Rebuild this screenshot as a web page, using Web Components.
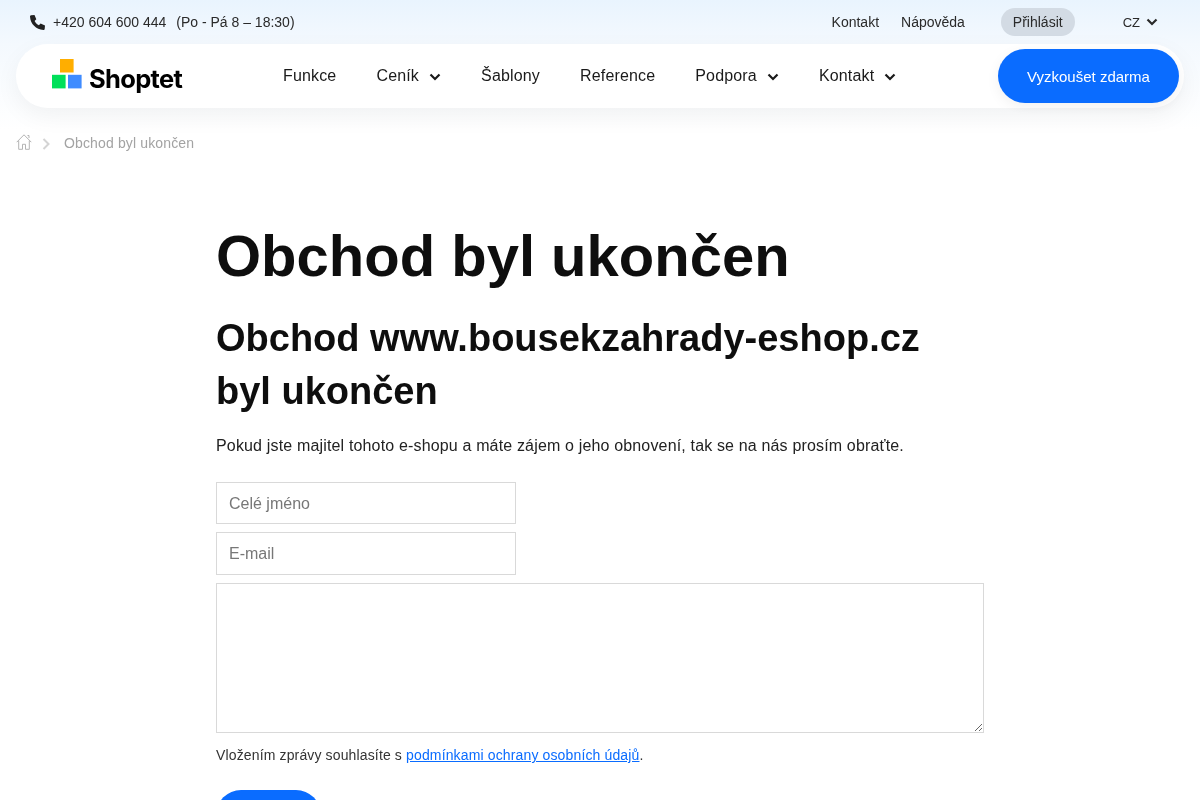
<!DOCTYPE html>
<html lang="cs">
<head>
<meta charset="utf-8">
<title>Obchod byl ukončen</title>
<style>
html, body { margin: 0; padding: 0; height: 800px; overflow: hidden; background: #fff; }
body { font-family: "Liberation Sans", Arial, sans-serif; color: #111; }
</style>
</head>
<body>
<site-header></site-header>
<bread-crumbs>Obchod byl ukončen</bread-crumbs>
<closed-shop></closed-shop>

<template id="chev"><svg width="12" height="8" viewBox="0 0 12 8" fill="none" stroke="currentColor" stroke-width="2.2"><path d="M1.5 1.500 6 6l4.500-4.500"/></svg></template>

<script>
const chevron = document.getElementById("chev").innerHTML;

const header = document.createElement("template");
header.innerHTML = `
<style>
:host { display: block; height: 130px; background: linear-gradient(180deg, #e9f4fe 0, #f4f9fe 44px, #fff 130px); }
* { box-sizing: border-box; }
.top {
  height: 44px; display: flex; align-items: center; padding: 0 42px 0 30px;
  font-size: 14px; color: #2a2a2a; will-change: transform;
}
.top svg.phone { margin-right: 8px; }
.hours { margin-left: 10px; }
.right { margin-left: auto; display: flex; align-items: center; }
.right a { color: inherit; text-decoration: none; }
.help { margin-left: 22px; }
.login { margin-left: 36px; background: #d3dbe4; border-radius: 14px; height: 28px; line-height: 28px; padding: 0 12px; }
.lang { margin-left: 48px; font-size: 13px; display: flex; align-items: center; gap: 6px; }
.lang svg { width: 12px; height: 8px; }
nav {
  margin: 0 16px; height: 64px; background: #fff; border-radius: 32px;
  box-shadow: 0 8px 24px rgba(0,0,0,.05); will-change: transform;
  display: flex; align-items: center; padding: 0 5px 0 36px; position: relative;
}
.logo { display: flex; align-items: flex-end; gap: 7px; width: 231px; height: 34px; margin-top: -9px; }
.logo svg { flex: none; }
.logo span {
  font-family: Inter, "Liberation Sans", sans-serif; font-weight: 700; font-size: 25.500px;
  letter-spacing: -.68px; color: #000; line-height: 30px; margin-bottom: -5px;
}
ul { list-style: none; margin: 0; padding: 0; display: flex; gap: 40px; font-size: 16px; letter-spacing: .16px; color: #1a1a1a; }
li { display: flex; align-items: center; gap: 10px; }
li svg { width: 12px; height: 8px; margin-top: 1px; }
.try {
  margin-left: auto; width: 181px; height: 54px; border-radius: 27px; background: #0a6cff; color: #fff;
  display: flex; align-items: center; justify-content: center; font-size: 15px;
  box-shadow: 0 4px 14px rgba(0,0,0,.06); padding-top: 1px;
}
</style>
<div class="top">
  <svg class="phone" width="15" height="15" viewBox="0 0 15 15"><path fill="#222" d="M1 .3 4.500 0l1.800 4.200L4.600 6c.9 1.800 2.400 3.300 4.300 4.200l1.700-1.600 4.400 1.800-.3 3.600c-.1.700-.7 1-1.300 1C6 14.600.4 9 0 1.600 0 .9.400.4 1 .3Z"/></svg>
  <span>+420 604 600 444</span><span class="hours">(Po - Pá 8 – 18:30)</span>
  <div class="right">
    <a href="#">Kontakt</a><a class="help" href="#">Nápověda</a><a class="login" href="#">Přihlásit</a>
    <span class="lang">CZ ${chevron}</span>
  </div>
</div>
<nav>
  <div class="logo">
    <svg width="30" height="30" viewBox="0 0 30 30"><rect x="8" y="0" width="13.600" height="13.500" fill="#ffae00"/><rect x="0" y="15.800" width="13.600" height="13.600" fill="#00e05a"/><rect x="16" y="15.800" width="13.600" height="13.600" fill="#3f8cff"/></svg>
    <span>Shoptet</span>
  </div>
  <ul>
    <li>Funkce</li>
    <li>Ceník ${chevron}</li>
    <li>Šablony</li>
    <li>Reference</li>
    <li>Podpora ${chevron}</li>
    <li>Kontakt ${chevron}</li>
  </ul>
  <a class="try">Vyzkoušet zdarma</a>
</nav>
`;
class SiteHeader extends HTMLElement {
  constructor() {
    super();
    this.attachShadow({ mode: "open" });
    this.shadowRoot.appendChild(header.content.cloneNode(true));
  }
}
customElements.define("site-header", SiteHeader);

const crumbs = document.createElement("template");
crumbs.innerHTML = `
<style>
:host { display: flex; align-items: center; height: 26px; padding-left: 16px; color: #a3a3a3; font-size: 14px; letter-spacing: .14px; will-change: transform; }
.home { margin-top: -2px; }
.sep { margin: 2px 14px 0 10px; }
</style>
<svg class="home" width="16" height="16" viewBox="0 0 16 16" fill="none" stroke="#b4b4b4"><path d="M.7 8.200 8 .8l7.300 7.400M2.700 6.500v8.800h3.800v-5h3v5h3.800V6.500"/><path d="M11.500 1.500h1.500v2.500"/></svg>
<svg class="sep" width="8" height="12" viewBox="0 0 8 12" fill="none" stroke="#d4d4d4" stroke-width="2"><path d="M1.500 1 6.500 6l-5 5"/></svg>
<slot></slot>
`;
class BreadCrumbs extends HTMLElement {
  constructor() {
    super();
    this.attachShadow({ mode: "open" });
    this.shadowRoot.appendChild(crumbs.content.cloneNode(true));
  }
}
customElements.define("bread-crumbs", BreadCrumbs);

const shop = document.createElement("template");
shop.innerHTML = `
<style>
:host { display: block; width: 768px; margin: 0 auto; padding-top: 64px; color: #0e0e0e; will-change: transform; }
* { box-sizing: border-box; }
h1 { margin: 0; font-size: 58px; line-height: 72px; font-weight: 700; }
h2 { margin: 20px 0 0; font-size: 38px; line-height: 53px; font-weight: 700; }
p { margin: 0; font-size: 16px; letter-spacing: .16px; }
.lead { margin-top: 15px; line-height: 26px; color: #222; }
input, textarea {
  display: block; font: 16px "Liberation Sans", Arial, sans-serif; border: 1px solid #d9d9d9; background: transparent;
  padding: 0 12px; outline: none; border-radius: 0; margin: 0;
}
input { width: 300px; height: 42px; }
input::placeholder { color: #777; opacity: 1; }
.name { margin-top: 23px; padding-top: 2px; }
.mail { margin-top: 8px; height: 43px; }
textarea { margin-top: 8px; width: 768px; height: 150px; }
.note { margin-top: 12px; font-size: 14px; line-height: 20px; color: #333; letter-spacing: .14px; }
.note a { color: #0a6cff; }
button { display: block; margin-top: 25px; width: 105px; height: 50px; border: 0; border-radius: 25px; background: #0a6cff; }
</style>
<h1>Obchod byl ukončen</h1>
<h2>Obchod www.bousekzahrady-eshop.cz<br>byl ukončen</h2>
<p class="lead">Pokud jste majitel tohoto e-shopu a máte zájem o jeho obnovení, tak se na nás prosím obraťte.</p>
<input class="name" placeholder="Celé jméno">
<input class="mail" placeholder="E-mail">
<textarea></textarea>
<p class="note">Vložením zprávy souhlasíte s <a href="#">podmínkami ochrany osobních údajů</a>.</p>
<button type="button"></button>
`;
class ClosedShop extends HTMLElement {
  constructor() {
    super();
    this.attachShadow({ mode: "open" });
    this.shadowRoot.appendChild(shop.content.cloneNode(true));
  }
}
customElements.define("closed-shop", ClosedShop);
</script>
</body>
</html>
